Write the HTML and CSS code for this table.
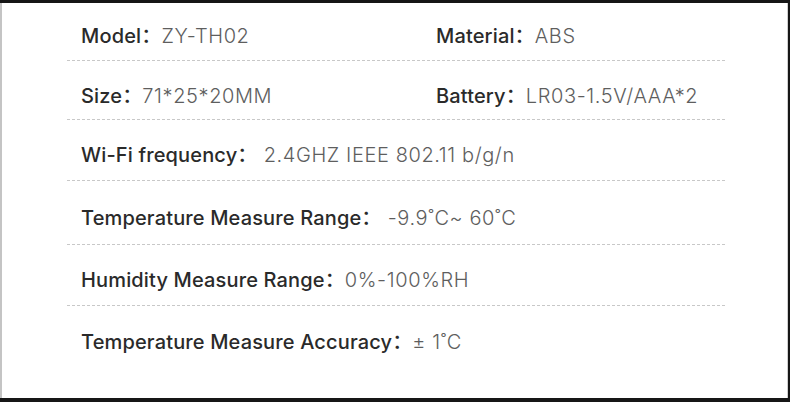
FILE: index.html
```html
<!DOCTYPE html>
<html>
<head>
<meta charset="utf-8">
<link rel="stylesheet" href="styles.css">
</head>
<body>
<div class="panel">
  <div class="specs">
    <div class="row two">
      <div class="cell"><span class="label">Model：</span><span class="value">ZY-TH02</span></div>
      <div class="cell"><span class="label">Material：</span><span class="value">ABS</span></div>
    </div>
    <div class="row two">
      <div class="cell"><span class="label">Size：</span><span class="value">71*25*20MM</span></div>
      <div class="cell"><span class="label">Battery：</span><span class="value">LR03-1.5V/AAA*2</span></div>
    </div>
    <div class="row">
      <div class="cell"><span class="label">Wi-Fi frequency：</span><span class="value"> 2.4GHZ IEEE 802.11 b/g/n</span></div>
    </div>
    <div class="row">
      <div class="cell"><span class="label">Temperature Measure Range：</span><span class="value"> -9.9˚C~ 60˚C</span></div>
    </div>
    <div class="row">
      <div class="cell"><span class="label">Humidity Measure Range：</span><span class="value">0%-100%RH</span></div>
    </div>
    <div class="row">
      <div class="cell"><span class="label">Temperature Measure Accuracy：</span><span class="value">± 1˚C</span></div>
    </div>
  </div>
</div>
</body>
</html>
```
FILE: styles.css
```css
html, body {
  margin: 0;
  padding: 0;
}
body {
  background: #161616;
  width: 790px;
  height: 402px;
  overflow: hidden;
  font-family: "Inter", "Noto Sans CJK SC", sans-serif;
}
.panel {
  box-sizing: border-box;
  margin: 3px 2px 4px 0;
  height: 395px;
  background: #fff;
  border-left: 2px solid #c4c4c4;
  border-right: 1px solid #d0d0d0;
  padding: 0 62px 0 65px;
}
.specs {
  display: flex;
  flex-direction: column;
}
.row {
  display: grid;
  grid-template-columns: 1fr;
  padding: 23px 0 12px 14px;
  height: 24px;
  border-bottom: 1px dashed #c8c8c8;
}
.row:nth-child(1) {
  padding-top: 21px;
}
.row:nth-child(2) {
  padding-bottom: 11px;
}
.row:nth-child(3) {
  padding-bottom: 13px;
}
.row:nth-child(4) {
  padding-top: 25px;
  padding-bottom: 14px;
}
.row:nth-child(5) {
  padding-bottom: 13px;
}
.row:nth-child(6) {
  padding-top: 24px;
  border-bottom: none;
}
.row.two {
  grid-template-columns: 355px 1fr;
}
.cell {
  font-size: 20px;
  line-height: 24px;
  white-space: pre;
}
.label {
  color: #2a2a2a;
  font-weight: 500;
  letter-spacing: 0.15px;
}
.value {
  color: #5e5e5e;
  font-weight: 300;
  letter-spacing: 0.6px;
}
```
